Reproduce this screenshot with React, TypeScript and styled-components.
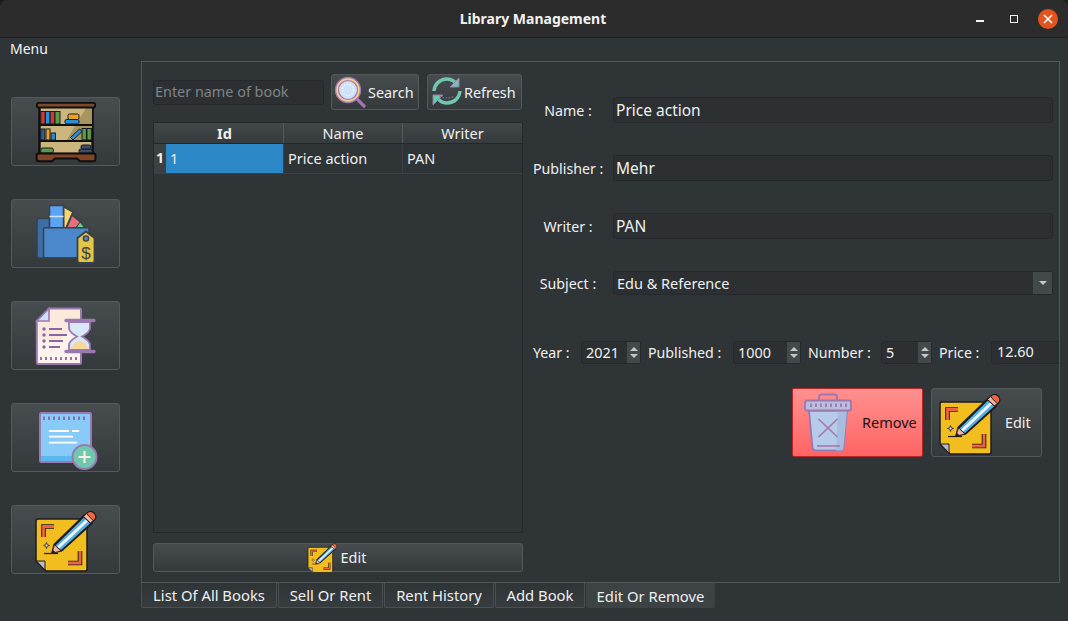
import React from "react";
import styled, { createGlobalStyle } from "styled-components";

const Global = createGlobalStyle`
  html, body { margin: 0; padding: 0; background: #1c1d1e; }
  body { font-family: "Noto Sans", "Open Sans", sans-serif; font-size: 14.5px; color: #eff0f1; }
  * { box-sizing: border-box; }
  input::placeholder { color: #7f8487; opacity: 1; }
`;

const Win = styled.div`
  width: 1068px; height: 621px; background: #2f3437; border-radius: 8px 8px 0 0;
  overflow: hidden; display: flex; flex-direction: column;
`;
const TitleBar = styled.div`
  height: 38px; flex: none; background: #2c2c2c; border-bottom: 1px solid #1f2021;
  display: grid; grid-template-columns: 1fr auto 1fr; align-items: center;
`;
const Title = styled.div`
  font-size: 14px; font-weight: 700; color: #f2f2f2; padding-right: 2px;
`;
const WinControls = styled.div`
  display: flex; justify-content: flex-end; align-items: center; gap: 26px; padding-right: 10px;
`;
const MinBtn = styled.span`
  width: 8px; height: 2px; background: #f2f2f2; margin-top: 4px;
`;
const MaxBtn = styled.span`
  width: 8px; height: 8px; border: 1px solid #f2f2f2;
`;
const CloseBtn = styled.span`
  width: 20px; height: 20px; border-radius: 50%; background: #e4541f; display: flex;
  align-items: center; justify-content: center; margin-left: -6px;
`;
const MenuBar = styled.div`
  height: 23px; flex: none; padding: 2px 0 0 10px; font-size: 14px; line-height: 18px; color: #f3f4f5;
`;
const Workspace = styled.div`
  display: flex; padding-left: 11px; flex: 1; min-height: 0;
`;
const Sidebar = styled.div`
  width: 109px; margin-right: 21px; flex: none; display: flex; flex-direction: column; gap: 33px; padding-top: 36px;
`;
const btnBg = `
  background: linear-gradient(#474c4f, #34393c);
  border: 1px solid #54595c; border-radius: 3px; color: #eff0f1;
`;
const SideButton = styled.div`
  ${btnBg}
  width: 109px; height: 69px; display: flex; align-items: center; justify-content: center;
  svg { overflow: visible; display: block; }
`;
const TabArea = styled.div`
  width: 919px; display: flex; flex-direction: column;
`;
const Pane = styled.div`
  height: 522px; border: 1px solid #52575a; background: #2f3437; display: flex; overflow: hidden; flex: none;
`;
const LeftCol = styled.div`
  width: 380px; flex: none; padding: 12px 0 0 11px; display: flex; flex-direction: column;
`;
const SearchRow = styled.div`
  display: flex; align-items: center; gap: 8px; height: 36px; width: 370px;
`;
const SearchInput = styled.input`
  width: 171px; height: 25px; margin-right: -1px; background: #2c3033; border: 1px solid #25292c; border-radius: 3px;
  color: #eff0f1; font: 14.4px "Noto Sans", sans-serif; padding: 0 1px 2px; outline: none;
`;
const ToolButton = styled.div<{ $w: number; $pad: number; $gap: number }>`
  ${btnBg}
  width: ${p => p.$w}px; height: 36px; flex: none; display: flex; align-items: center; font-size: 14.4px;
  padding-left: ${p => p.$pad}px; gap: ${p => p.$gap}px; svg { display: block; flex: none; }
`;
const Table = styled.div`
  width: 370px; height: 411px; margin-top: 12px; background: #2f3437; border: 1px solid #25292c; flex: none;
`;
const HeadRow = styled.div`
  display: grid; grid-template-columns: 12px 118px 119px 1fr; height: 21px;
  background: linear-gradient(#42474a, #363b3e); border-bottom: 1px solid #24272a;
`;
const HeadCorner = styled.div``;
const HeadCell = styled.div<{ $bold?: boolean }>`
  text-align: center; font-size: 14.5px; line-height: 20px; font-weight: ${p => (p.$bold ? 700 : 400)};
  border-right: 1px solid #54595c; &:last-child { border-right: 0; }
`;
const BodyRow = styled.div`
  display: grid; grid-template-columns: 12px 118px 119px 1fr; height: 30px; border-bottom: 1px solid #3c4144;
`;
const RowHead = styled.div`
  background: #3b4043; font-size: 14px; font-weight: 700; line-height: 28px; text-align: center;
`;
const Cell = styled.div<{ $sel?: boolean }>`
  font-size: 14.5px; line-height: 28px; padding-left: 4px; background: ${p => (p.$sel ? "#2b87c5" : "transparent")};
  border-right: 1px solid #3c4144; &:last-child { border-right: 0; }
`;
const WideButton = styled.div`
  ${btnBg}
  width: 370px; height: 29px; margin-top: 10px; flex: none; display: flex; align-items: center; justify-content: center;
  gap: 4px; font-size: 14.4px; padding-right: 2px; svg { display: block; overflow: visible; }
`;
const RightCol = styled.div`
  flex: none; width: 535px; padding: 35px 0 0 11px; display: flex; flex-direction: column;
`;
const Forms = styled.div`
  display: flex; flex-direction: column; gap: 32px;
`;
const FormRow = styled.div`
  display: flex; align-items: center; gap: 10px;
`;
const FormLabel = styled.div`
  width: 70px; flex: none; text-align: center; font-size: 14.2px; white-space: nowrap;
`;
const TextField = styled.input`
  width: 440px; height: 26px; background: #2c3033; border: 1px solid #25292c; border-radius: 3px; color: #eff0f1;
  font: 15.5px "Noto Sans", sans-serif; padding: 0 2px 1px; outline: none;
`;
const Combo = styled.div`
  width: 440px; height: 24px; background: #2c3033; border: 1px solid #25292c; border-radius: 3px; display: flex;
  align-items: center; justify-content: space-between; font-size: 14.5px; padding-left: 3px;
`;
const ComboArrow = styled.div`
  width: 19px; height: 22px; background: #43484b; display: flex; align-items: center; justify-content: center;
  &::after { content: ""; border: 4px solid transparent; border-top: 4px solid #c4c8ca; border-bottom: 0; }
`;
const SpinRow = styled.div`
  display: flex; align-items: center; gap: 7px; margin-top: 46px; height: 22px;
`;
const SpinLabel = styled.div<{ $w: number }>`
  width: ${p => p.$w}px; flex: none; font-size: 14.2px; white-space: nowrap;
`;
const Spin = styled.div<{ $w: number }>`
  width: ${p => p.$w}px; height: 23px; flex: none; background: #2c3033; border: 1px solid #25292c; border-radius: 3px;
  display: flex; align-items: center; justify-content: space-between; padding-left: 4px; font-size: 14.4px;
`;
const SpinArrows = styled.div`
  width: 13px; height: 21px; background: #44494c; display: flex; flex-direction: column; align-items: center;
  justify-content: center; gap: 3px;
`;
const ArrowUp = styled.span`
  border: 4px solid transparent; border-bottom: 4px solid #c4c8ca; border-top: 0;
`;
const ArrowDown = styled.span`
  border: 4px solid transparent; border-top: 4px solid #c4c8ca; border-bottom: 0;
`;
const PriceField = styled.div`
  width: 80px; height: 23px; flex: none; background: #2c3033; border: 1px solid #25292c; border-radius: 3px;
  padding-left: 5px; font-size: 14.4px; line-height: 20px;
`;
const ActionRow = styled.div`
  display: flex; justify-content: flex-end; gap: 8px; width: 509px; margin-top: 25px;
`;
const RemoveButton = styled.div`
  width: 131px; height: 69px; background: linear-gradient(#ff9090, #ff6464); border: 1px solid #b62424; border-radius: 2px;
  color: #1b1111; display: flex; align-items: center; gap: 10px; padding: 0 0 1px 11px; font-size: 14.5px;
  svg { display: block; flex: none; }
`;
const EditButton = styled.div`
  ${btnBg}
  width: 111px; height: 69px; display: flex; align-items: center; gap: 5px; padding-left: 8px; font-size: 14.4px;
  svg { display: block; flex: none; overflow: visible; }
`;
const Tabs = styled.div`
  display: flex; gap: 1px; height: 26px; align-items: flex-end; margin-top: -1px;
`;
const Tab = styled.div<{ $w: number; $active?: boolean }>`
  width: ${p => p.$w}px; height: ${p => (p.$active ? 26 : 25)}px; flex: none; text-align: center; font-size: 14.8px;
  line-height: ${p => (p.$active ? 26 : 24)}px; border: 1px solid ${p => (p.$active ? "#3d4245" : "#4a4f52")};
  border-top: ${p => (p.$active ? "1px solid #52575a" : "0")}; border-radius: 0 0 2px 2px;
  background: ${p => (p.$active ? "#3d4245" : "linear-gradient(#2f3437, #373c3f)")};
`;

const Bookshelf = () => (
  <svg width="60" height="60" viewBox="0 0 60 60">
    <rect x="3.5" y="4" width="53" height="48" fill="#cdb67e" stroke="#0e0e10" strokeWidth="2.4" />
    <path d="M56 5V39H30L50 6Z" fill="#a8945f" />
    <rect x="0.9" y="0.9" width="58.2" height="4.6" rx="1.5" fill="#7b4a2d" stroke="#0e0e10" strokeWidth="1.8" />
    <path d="M3 23H57M3 39H57" stroke="#0e0e10" strokeWidth="2.2" />
    <g stroke="#141a26" strokeWidth="1">
      <rect x="4.8" y="9.5" width="4.4" height="12.5" fill="#d33a2c" />
      <rect x="9.4" y="9.5" width="4.6" height="12.5" fill="#2c8fd6" />
      <rect x="14.2" y="9.5" width="4.6" height="12.5" fill="#d33a2c" />
      <rect x="19" y="9.5" width="5" height="12.5" fill="#5f9a45" />
      <rect x="29" y="17.5" width="14" height="4.5" rx="1.5" fill="#2c8fd6" />
      <rect x="32" y="12" width="11" height="5.5" rx="1.5" fill="#f0a21e" />
      <rect x="4.8" y="27" width="4" height="11" fill="#2f5f96" />
      <rect x="10" y="27" width="4" height="11" fill="#f0a21e" />
      <rect x="15" y="31" width="4.4" height="7" fill="#2c8fd6" />
      <rect x="46" y="26.5" width="4.4" height="11.5" fill="#5f9a45" />
      <rect x="51" y="26.5" width="4.4" height="11.5" fill="#5f9a45" />
      <path d="M34.5 35.5L43.5 27L46 29.5L37 38Z" fill="#2c8fd6" />
      <rect x="4.8" y="46" width="12.5" height="5" rx="1.5" fill="#5f9a45" />
      <rect x="43" y="47" width="13" height="4" rx="1.5" fill="#3f4c66" />
      <rect x="45" y="43" width="10" height="4" rx="1.5" fill="#3f4c66" />
    </g>
    <path d="M2.5 51.5H57.5Q59.5 51.5 59.5 53.5V57Q59.5 59.3 57 59.3H44L41 56.5H19L16 59.3H3Q.6 59.3.6 57V53.5Q.6 51.5 2.5 51.5Z" fill="#7f4526" stroke="#0e0e10" strokeWidth="2" />
  </svg>
);

const FolderTag = () => (
  <svg width="60" height="60" viewBox="0 0 60 60">
    <rect x="1" y="14.5" width="40" height="39.5" rx="1.5" fill="#3b6ea6" stroke="#3c4048" strokeWidth="1.6" />
    <path d="M27.500 2.500L37 8L30 24H27.500Z" fill="#f5d76e" stroke="#3c4048" strokeWidth="1.6" />
    <path d="M36 11L45 18L39 25H30Z" fill="#e86f7e" stroke="#3c4048" strokeWidth="1.6" />
    <path d="M44 18L49 24H40Z" fill="#6fce86" stroke="#3c4048" strokeWidth="1" />
    <rect x="13.5" y="1.5" width="14" height="23" fill="#5ba4f4" stroke="#3c4048" strokeWidth="1.6" />
    <path d="M13.5 12.5H27.5" stroke="#cfe3fa" strokeWidth="1.4" />
    <rect x="7.5" y="23.8" width="45.5" height="30" rx="1.5" fill="#4a87cb" stroke="#3c4048" strokeWidth="1.6" />
    <path d="M50 27.5L58.5 34V56.5Q58.5 59 56 59H44Q41.5 59 41.5 56.5V34Z" fill="#e4c645" stroke="#3c4048" strokeWidth="1.8" />
    <circle cx="50" cy="34.5" r="2.6" fill="#4a87cb" stroke="#3c4048" strokeWidth="1.4" />
    <text x="50" y="55" textAnchor="middle" fontFamily="Liberation Sans, sans-serif" fontSize="17" fill="#3c4048">$</text>
  </svg>
);

const DocHourglass = () => (
  <svg width="60" height="60" viewBox="0 0 60 60">
    <path d="M13 2.5H43.5Q45 2.5 45 4V56.5Q45 58 43.5 58H2Q.8 58 .8 56.5V15Z" fill="#fdf3ec" stroke="#9a78b0" strokeWidth="2" />
    <path d="M14 4L44 4V14L24 34H2V16Z" fill="#fbe9dc" />
    <path d="M13 2.5V15H.8Z" fill="#c7e4f8" stroke="#9a78b0" strokeWidth="1.6" />
    <g fill="#8a67a4">
      <circle cx="8" cy="23" r="1.7" /><circle cx="8" cy="29" r="1.7" /><circle cx="8" cy="35" r="1.7" /><circle cx="8" cy="41" r="1.7" />
    </g>
    <path d="M13 23H26M13 29H31M13 35H27M13 41H24" stroke="#8a67a4" strokeWidth="1.8" />
    <path d="M5 51V54M10 51V54M15 51V54M20 51V54M25 51V54M30 51V54M35 51V54M40 51V54" stroke="#8a67a4" strokeWidth="1.8" />
    <path d="M33 16H54V22Q54 26 46 30.5Q54 35 54 39V44H33V39Q33 35 41 30.5Q33 26 33 22Z" fill="#d8e8f8" stroke="#9a78b0" strokeWidth="1.8" />
    <path d="M35 43Q36 37 43.500 34.500Q51 37 52 43Z" fill="#f6d89c" />
    <path d="M30 14.500H58M30 45.500H58" stroke="#9a78b0" strokeWidth="3.4" strokeLinecap="round" />
  </svg>
);

const NotePlus = () => (
  <svg width="60" height="60" viewBox="0 0 60 60">
    <rect x="4" y="5" width="51" height="49" rx="1.5" fill="#88cbf9" stroke="#9a78b0" strokeWidth="2" />
    <path d="M5 48H54V52.500Q54 53 53 53H6Q5 53 5 52.500Z" fill="#5cb7ef" />
    <path d="M8 8.500V12M13 8.500V12M18 8.500V12M23 8.500V12M28 8.500V12M33 8.500V12M38 8.500V12M43 8.500V12M48 8.500V12" stroke="#8a67a4" strokeWidth="1.8" />
    <path d="M13 23H33M36 23H43M13 28.700H37M13 34.700H41" stroke="#fff" strokeWidth="1.8" />
    <circle cx="48.500" cy="49" r="12" fill="#6fc8ae" stroke="#9a78b0" strokeWidth="2" />
    <path d="M48.500 43V55M42.500 49H54.500" stroke="#f6f1e4" strokeWidth="2.200" />
  </svg>
);

const StickyEdit = ({ size = 60 }: { size?: number }) => (
  <svg width={size} height={size} viewBox="0 0 60 60">
    <path d="M2 9H49Q51 9 51 11V59Q51 61 49 61H10L0 51V11Q0 9 2 9Z" fill="#f1bd1f" stroke="#1c1c20" strokeWidth="1.500" />
    <path d="M0.500 51H9V60Z" fill="#b9bcc0" stroke="#1c1c20" strokeWidth="1" />
    <path d="M7.500 27V16.500H18" fill="none" stroke="#1c1c20" strokeWidth="4.600" />
    <path d="M7.500 27V16.500H18" fill="none" stroke="#ec6440" strokeWidth="2.800" />
    <path d="M32 53H44V41" fill="none" stroke="#1c1c20" strokeWidth="4.600" />
    <path d="M32 53H44V41" fill="none" stroke="#ec6440" strokeWidth="2.800" />
    <path d="M10.500 32.500L11.200 34.800L13.500 35.500L11.200 36.200L10.500 38.500L9.800 36.200L7.500 35.500L9.800 34.800Z" fill="#fff" stroke="#1c1c20" strokeWidth=".8" />
    <path d="M8 43.500H22" stroke="#1c1c20" strokeWidth="1.200" />
    <path d="M15 44L17.500 34L48 4.500L57 13.500L26 41.500Z" fill="#1c1c20" />
    <path d="M19.500 35.500L49 6.500L55 12.500L25 40Z" fill="#53b0e2" />
    <path d="M22.200 37.500L52 9.500" stroke="#eef6fb" strokeWidth="3" />
    <path d="M15.800 43.200L18.500 34.800L25 41Z" fill="#f4b59c" stroke="#1c1c20" strokeWidth=".8" />
    <path d="M15.800 43.200L16.800 39.800L19.300 42.200Z" fill="#1c1c20" />
    <path d="M47.500 6.500L51 3Q54 0 57.500 2.500L59 4Q61 7.500 58.500 10L55 13.500Z" fill="#ee6540" stroke="#1c1c20" strokeWidth="1.200" />
    <path d="M47.500 6.500L50.500 3.600L57 10.500L54.500 13Z" fill="#f7b7a0" stroke="#1c1c20" strokeWidth="1" />
  </svg>
);

const Trash = () => (
  <svg width="48" height="58" viewBox="0 0 48 58">
    <path d="M15 7V4Q15 1.500 17.500 1.500H30.500Q33 1.500 33 4V7" fill="none" stroke="#9a78b0" strokeWidth="1.800" />
    <path d="M5 17.500H43L39.500 55Q39 57.500 36.500 57.500H11.500Q9 57.500 8.500 55Z" fill="#b6cbea" stroke="#9a78b0" strokeWidth="1.800" />
    <path d="M34 18H43L39.500 55Q39 57.500 36.500 57.500H32Z" fill="#a7bde0" />
    <rect x="1" y="7.500" width="46" height="10" rx="2" fill="#bcbcdc" stroke="#9a78b0" strokeWidth="1.800" />
    <path d="M7 10.500V14M12 10.500V14M17 10.500V14M22 10.500V14M27 10.500V14M32 10.500V14M37 10.500V14M42 10.500V14" stroke="#8a67a4" strokeWidth="1.400" />
    <path d="M14.500 26L33.500 44M33.500 26L14.500 44" stroke="#a678a8" strokeWidth="1.600" />
    <path d="M13 53H36" stroke="#a678a8" strokeWidth="1.600" />
  </svg>
);

const Magnifier = () => (
  <svg width="32" height="32" viewBox="0 0 32 32">
    <path d="M23.500 23.500L30 30" stroke="#a377b4" strokeWidth="3.200" strokeLinecap="round" />
    <circle cx="14" cy="14" r="12.500" fill="#f6cf86" stroke="#a07ab2" strokeWidth="1.400" />
    <circle cx="14" cy="14" r="9.500" fill="#cfe0fb" stroke="#a07ab2" strokeWidth="1.200" />
    <circle cx="14" cy="14" r="5.500" fill="none" stroke="#f3f7ff" strokeWidth="1.400" strokeDasharray="1.500 1.500" />
  </svg>
);

const RefreshIcon = () => (
  <svg width="32" height="32" viewBox="0 0 32 32">
    <path d="M3 15C3.500 8 9 3 16 3C20 3 23 5 25 7" fill="none" stroke="#72c6ae" strokeWidth="3.400" />
    <path d="M29 15C28.500 22 23 27 16 27C12 27 9 25 7 23" fill="none" stroke="#72c6ae" strokeWidth="3.400" />
    <path d="M28 2V11H19Z" fill="#72c6ae" stroke="#9a78b0" strokeWidth="1" />
    <path d="M2 29V19H12Z" fill="#72c6ae" stroke="#9a78b0" strokeWidth="1" />
    <path d="M9 20C11 22.500 21 22.500 23 20" fill="none" stroke="#8a67a4" strokeWidth="1.400" strokeDasharray="1.500 1.500" />
  </svg>
);

const books = [["List Of All Books", 136], ["Sell Or Rent", 105], ["Rent History", 110], ["Add Book", 90], ["Edit Or Remove", 129]] as const;

const SpinBox = ({ value, w }: { value: string; w: number }) => (
  <Spin $w={w}>
    {value}
    <SpinArrows><ArrowUp /><ArrowDown /></SpinArrows>
  </Spin>
);

export default function App() {
  return (
    <Win>
      <Global />
      <TitleBar>
        <span />
        <Title>Library Management</Title>
        <WinControls>
          <MinBtn />
          <MaxBtn />
          <CloseBtn>
            <svg width="10" height="10" viewBox="0 0 10 10"><path d="M1 1L9 9M9 1L1 9" stroke="#fff" strokeWidth="1.600" /></svg>
          </CloseBtn>
        </WinControls>
      </TitleBar>
      <MenuBar>Menu</MenuBar>
      <Workspace>
        <Sidebar>
          <SideButton><Bookshelf /></SideButton>
          <SideButton><FolderTag /></SideButton>
          <SideButton><DocHourglass /></SideButton>
          <SideButton><NotePlus /></SideButton>
          <SideButton><StickyEdit /></SideButton>
        </Sidebar>
        <TabArea>
          <Pane>
            <LeftCol>
              <SearchRow>
                <SearchInput placeholder="Enter name of book" readOnly />
                <ToolButton $w={88} $pad={2} $gap={2}><Magnifier />Search</ToolButton>
                <ToolButton $w={95} $pad={3} $gap={1}><RefreshIcon />Refresh</ToolButton>
              </SearchRow>
              <Table>
                <HeadRow>
                  <HeadCorner />
                  <HeadCell $bold>Id</HeadCell>
                  <HeadCell>Name</HeadCell>
                  <HeadCell>Writer</HeadCell>
                </HeadRow>
                <BodyRow>
                  <RowHead>1</RowHead>
                  <Cell $sel>1</Cell>
                  <Cell>Price action</Cell>
                  <Cell>PAN</Cell>
                </BodyRow>
              </Table>
              <WideButton><StickyEdit size={29} />Edit</WideButton>
            </LeftCol>
            <RightCol>
              <Forms>
                <FormRow><FormLabel>Name :</FormLabel><TextField readOnly value="Price action" /></FormRow>
                <FormRow><FormLabel>Publisher :</FormLabel><TextField readOnly value="Mehr" /></FormRow>
                <FormRow><FormLabel>Writer :</FormLabel><TextField readOnly value="PAN" /></FormRow>
                <FormRow><FormLabel>Subject :</FormLabel><Combo>Edu &amp; Reference<ComboArrow /></Combo></FormRow>
              </Forms>
              <SpinRow>
                <SpinLabel $w={41}>Year :</SpinLabel>
                <SpinBox value="2021" w={60} />
                <SpinLabel $w={78}>Published :</SpinLabel>
                <SpinBox value="1000" w={68} />
                <SpinLabel $w={66}>Number :</SpinLabel>
                <SpinBox value="5" w={51} />
                <SpinLabel $w={45}>Price :</SpinLabel>
                <PriceField>12.60</PriceField>
              </SpinRow>
              <ActionRow>
                <RemoveButton><Trash />Remove</RemoveButton>
                <EditButton><StickyEdit />Edit</EditButton>
              </ActionRow>
            </RightCol>
          </Pane>
          <Tabs>
            {books.map(([label, w]) => (
              <Tab key={label} $w={w} $active={label === "Edit Or Remove"}>{label}</Tab>
            ))}
          </Tabs>
        </TabArea>
      </Workspace>
    </Win>
  );
}
